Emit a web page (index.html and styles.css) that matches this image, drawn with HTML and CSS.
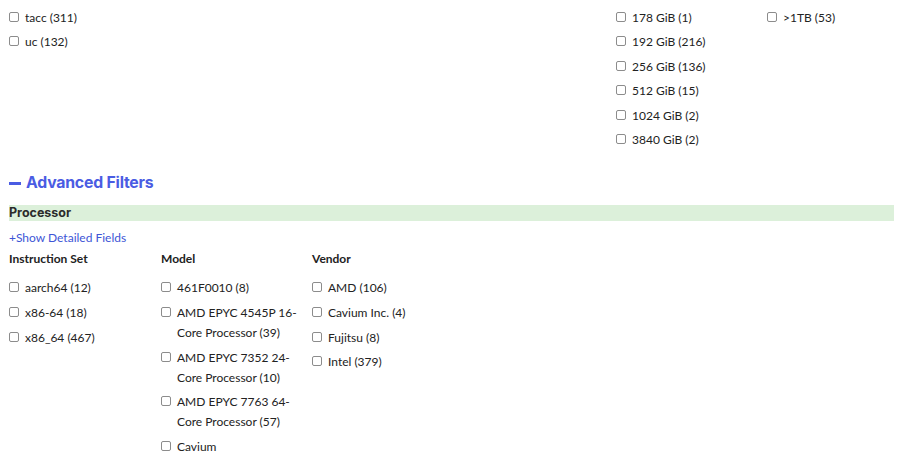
FILE: index.html
```html
<html>
  <head>
    <link rel="stylesheet" href="styles.css">
  </head>
  <body>
    <div class="facets">
      <ul class="opts">
        <li><label><input type="checkbox"/>tacc (311)</label></li>
        <li><label><input type="checkbox"/>uc (132)</label></li>
      </ul>
      <ul class="opts mem">
        <li><label><input type="checkbox"/>178 GiB (1)</label></li>
        <li><label><input type="checkbox"/>192 GiB (216)</label></li>
        <li><label><input type="checkbox"/>256 GiB (136)</label></li>
        <li><label><input type="checkbox"/>512 GiB (15)</label></li>
        <li><label><input type="checkbox"/>1024 GiB (2)</label></li>
        <li><label><input type="checkbox"/>3840 GiB (2)</label></li>
      </ul>
      <ul class="opts">
        <li><label><input type="checkbox"/>&gt;1TB (53)</label></li>
      </ul>
    </div>

    <h2 class="adv"><span class="minus"></span>Advanced Filters</h2>

    <div class="group-bar">Processor</div>
    <a class="show-more" href="#">+Show Detailed Fields</a>

    <div class="fields">
      <div class="field">
        <h4>Instruction Set</h4>
        <ul class="opts tight">
          <li><label><input type="checkbox"/>aarch64 (12)</label></li>
          <li><label><input type="checkbox"/>x86-64 (18)</label></li>
          <li><label><input type="checkbox"/>x86_64 (467)</label></li>
        </ul>
      </div>
      <div class="field">
        <h4>Model</h4>
        <ul class="opts tight">
          <li><label><input type="checkbox"/><span>461F0010 (8)</span></label></li>
          <li><label><input type="checkbox"/><span>AMD EPYC 4545P 16-Core Processor (39)</span></label></li>
          <li><label><input type="checkbox"/><span>AMD EPYC 7352 24-Core Processor (10)</span></label></li>
          <li><label><input type="checkbox"/><span>AMD EPYC 7763 64-Core Processor (57)</span></label></li>
          <li><label><input type="checkbox"/><span>Cavium</span></label></li>
        </ul>
      </div>
      <div class="field">
        <h4>Vendor</h4>
        <ul class="opts tight">
          <li><label><input type="checkbox"/>AMD (106)</label></li>
          <li><label><input type="checkbox"/>Cavium Inc. (4)</label></li>
          <li><label><input type="checkbox"/>Fujitsu (8)</label></li>
          <li><label><input type="checkbox"/>Intel (379)</label></li>
        </ul>
      </div>
    </div>
  </body>
</html>
```

FILE: styles.css
```css
html, body{
  margin: 0;
  background: #fff;
}
body{
  padding: 8px 10px 0 9px;
  font-family: 'Lato', 'Open Sans', sans-serif;
  font-size: 12px;
  color: #222;
  overflow: hidden;
}

ul.opts{
  list-style: none;
  margin: 0;
  padding: 0;
}
ul.opts li{
  line-height: 20px;
  margin-bottom: 4.4px;
}
ul.opts.tight li{
  margin-bottom: 4.6px;
}
ul.opts label{
  display: flex;
  align-items: flex-start;
}
ul.opts input{
  -webkit-appearance: none;
  appearance: none;
  flex: none;
  width: 10px;
  height: 10px;
  margin: 4px 6px 0 0;
  border: 1px solid #8c8c8c;
  border-radius: 2px;
  background: #fff;
}

.facets{
  display: grid;
  grid-template-columns: 607px 151px 1fr;
}
.facets .mem{
  grid-column: 2;
}

.adv{
  display: flex;
  align-items: center;
  margin: 19px 0 0;
  font-family: 'Inter', sans-serif;
  font-size: 15.8px;
  line-height: 20px;
  font-weight: 700;
  color: #4a5ce3;
  letter-spacing: -0.2px;
}
.minus{
  display: inline-block;
  width: 12px;
  height: 3px;
  background: #4a5ce3;
  margin-right: 5px;
}

.group-bar{
  margin-top: 12px;
  background: #dcf0da;
  font-family: 'Inter', sans-serif;
  font-weight: 700;
  font-size: 12.5px;
  line-height: 16px;
  color: #2b2b2b;
}

.show-more{
  display: block;
  margin-top: 7px;
  line-height: 20px;
  color: #3d55d6;
  text-decoration: none;
}

.fields{
  display: grid;
  grid-template-columns: 152px 151px 151px;
}
.field h4{
  margin: 1px 0 9px;
  font-size: 12px;
  line-height: 20px;
  font-weight: 700;
  color: #222;
}
.field span{
  width: 128px;
}
```
